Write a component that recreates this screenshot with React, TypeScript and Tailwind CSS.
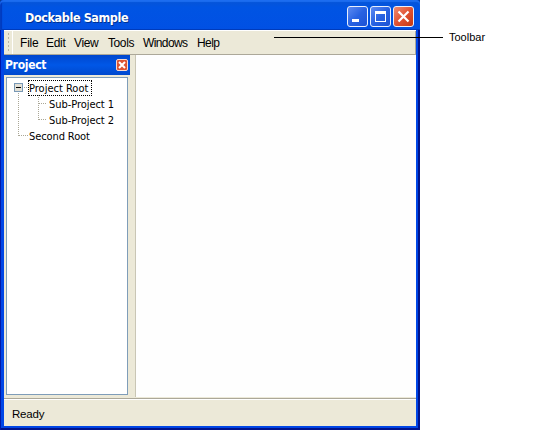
import type { ReactNode } from 'react';

const tahoma = "font-['DejaVu_Sans_Condensed','DejaVu_Sans',sans-serif]";
const arial = "font-['Liberation_Sans',Arial,sans-serif]";

const menus = [
  { label: 'File', style: 'w-[26px] tracking-[-0.2px]' },
  { label: 'Edit', style: 'w-[28px] tracking-[-0.3px]' },
  { label: 'View', style: 'w-[34px] tracking-[-0.4px]' },
  { label: 'Tools', style: 'w-[35px] tracking-[-0.4px]' },
  { label: 'Windows', style: 'w-[54px] tracking-[-0.6px]' },
  { label: 'Help', style: 'w-[30px] tracking-[-0.6px]' },
];

function CaptionButton({ close = false, children }: { close?: boolean; children: ReactNode }) {
  return (
    <button
      className={`h-[21px] w-[21px] rounded-[3px] border border-[#e8effc] ${
        close
          ? 'bg-linear-to-br from-[#ed8b70] via-[#e15232] to-[#c4370f]'
          : 'bg-linear-to-br from-[#5c8af2] via-[#2862e2] to-[#1c52d4]'
      }`}
    >
      <svg width="19" height="19" viewBox="0 0 19 19" fill="none" shapeRendering="crispEdges">
        {children}
      </svg>
    </button>
  );
}

function TitleBar() {
  return (
    <header className="flex h-[30px] shrink-0 items-start rounded-t-[4px] bg-linear-to-b from-[#0754d5] from-0% via-[#0054e3] via-25% to-[#0150e4] pt-[6px] pr-[6px] pl-[25px] shadow-[inset_0_2px_1px_#1c6df0,inset_0_-1px_0_#003bbb,inset_2px_0_1px_#0039bd]">
      <h1 className={`grow text-[12.5px] leading-[23px] font-bold whitespace-nowrap tracking-[-0.4px] text-white [text-shadow:1px_1px_0_#00318f] ${tahoma}`}>
        Dockable Sample
      </h1>
      <div className="flex gap-[2px]">
        <CaptionButton>
          <path d="M4 12h7v3H4z" fill="white" />
        </CaptionButton>
        <CaptionButton>
          <path d="M4 4h11v11H4zM5 7v7h9V7z" fill="white" fillRule="evenodd" />
        </CaptionButton>
        <CaptionButton close>
          <path d="M4.5 4.5l10 10M14.5 4.5l-10 10" stroke="white" strokeWidth="2.2" shapeRendering="auto" />
        </CaptionButton>
      </div>
    </header>
  );
}

function MenuBar() {
  return (
    <nav className="flex h-[25px] shrink-0 border-t border-b border-t-white border-b-[#aca899] bg-[#ece9d8]">
      <div className="flex w-[9px] items-center border-r border-white pl-1">
        <svg width="2" height="20" viewBox="0 0 2 20">
          <path d="M.5 0v20" stroke="#b9b5a2" strokeDasharray="2 2" />
        </svg>
      </div>
      <ul className={`flex grow border-r border-[#aca899] pl-[7px] text-[12px] leading-[25px] text-black ${arial}`}>
        {menus.map((m) => (
          <li key={m.label} className={`whitespace-nowrap ${m.style}`}>{m.label}</li>
        ))}
      </ul>
    </nav>
  );
}

function TreeLines() {
  return (
    <svg className="absolute top-0 left-0" width="40" height="70" viewBox="0 0 40 70" fill="none" shapeRendering="crispEdges">
      <path d="M11.5 15v43M11.5 57.5h9M17 9.5h4M31.5 17v25M31.5 25.5h9M31.5 41.5h9" stroke="#aaa796" strokeDasharray="1 1" />
      <rect x="7.5" y="5.5" width="8" height="8" rx="1" fill="#e3e0d6" stroke="#7898b5" />
      <path d="M9 9.5h5" stroke="#000" />
    </svg>
  );
}

function ProjectPanel() {
  return (
    <aside className="flex w-[131px] shrink-0 flex-col pb-[3px]">
      <div className="flex h-[20px] w-[126px] shrink-0 items-center bg-linear-to-b from-[#0047ce] via-[#0057e7] to-[#0049ce] pr-[2px] pl-[1px]">
        <h2 className={`grow text-[12px] leading-[20px] font-bold tracking-[-0.3px] text-white ${tahoma}`}>Project</h2>
        <button className="h-[12px] w-[12px] rounded-[2px] border border-[#f8d9cf] bg-[#dc5434]">
          <svg width="10" height="10" viewBox="0 0 10 10">
            <path d="M2 2l6 6M8 2L2 8" stroke="white" strokeWidth="2" />
          </svg>
        </button>
      </div>
      <div className="relative mt-[2px] ml-[2px] w-[122px] grow border border-[#7f9db9] bg-white">
        <TreeLines />
        <ul className={`pt-[2px] text-[11px] whitespace-nowrap text-black ${tahoma}`}>
          <li className="flex h-4 pl-[21px]">
            <span className="h-4 w-[64px] border border-dotted border-black leading-[16px]">Project Root</span>
          </li>
          <li className="h-4 pl-[42px] leading-[18px] tracking-[-0.05px]">Sub-Project 1</li>
          <li className="h-4 pl-[42px] leading-[18px] tracking-[-0.05px]">Sub-Project 2</li>
          <li className="h-4 pl-[22px] leading-[18px] tracking-[-0.1px]">Second Root</li>
        </ul>
      </div>
    </aside>
  );
}

export default function App() {
  return (
    <div className="flex h-[430px] w-[536px] overflow-hidden bg-white">
      <div className="h-[430px] w-[420px] shrink-0 bg-[#0a3f96]">
        <div className="flex h-full flex-col rounded-t-[4px] bg-[#0046e6] shadow-[inset_1px_0_0_#0019a8,inset_-2px_-2px_0_#00138c]">
          <TitleBar />
          <div className="mx-[4px] mb-[4px] flex min-h-0 grow flex-col bg-[#ece9d8]">
            <MenuBar />
            <div className="flex min-h-0 grow">
              <ProjectPanel />
              <main className="mb-[1px] grow border-l border-[#c9c6b5] bg-[#fefefe]" />
            </div>
            <footer className={`h-[28px] shrink-0 border-t border-[#aca899] pl-[8px] text-[11.5px] leading-[30px] tracking-[-0.2px] text-black shadow-[inset_0_1px_0_white] ${arial}`}>
              Ready
            </footer>
          </div>
        </div>
      </div>
      <div className="relative grow">
        <span className="absolute top-[37px] left-[-146px] h-px w-[169px] bg-black" />
        <p className={`pt-[31px] pl-[29px] text-[11px] leading-[13px] text-black ${arial}`}>Toolbar</p>
      </div>
    </div>
  );
}
